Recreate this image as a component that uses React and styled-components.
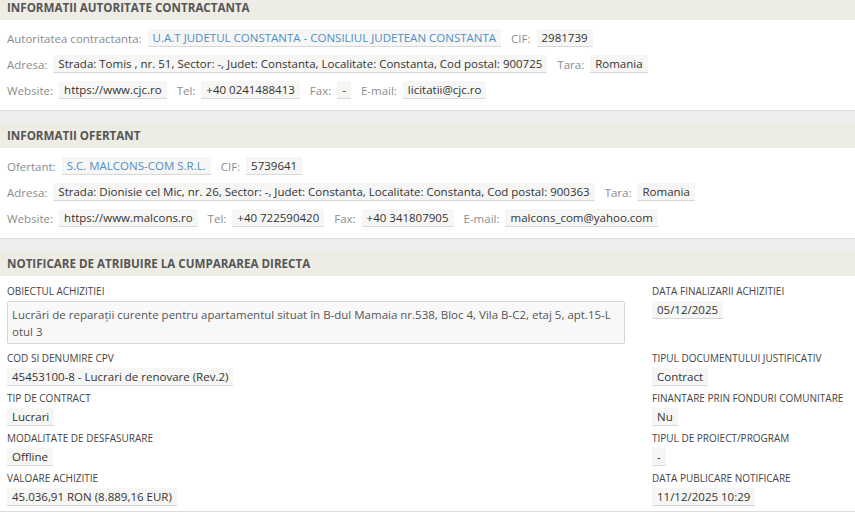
import React from "react";
import styled, { createGlobalStyle } from "styled-components";

const GlobalStyle = createGlobalStyle`
  html, body {
    margin: 0;
    padding: 0;
    background: #ffffff;
    font-family: "Open Sans", "Liberation Sans", sans-serif;
    overflow: hidden;
  }
`;

const Page = styled.div`
  width: 855px;
  margin-top: -5px;
`;

const Section = styled.section`
  background: #ffffff;
  border-bottom: 1px solid #dcdcdc;
`;

const Spacer = styled.div`
  height: 12px;
  background: #eeeeee;
`;

const SectionHeader = styled.div`
  height: 25px;
  display: flex;
  align-items: center;
  padding: 0 7px;
  background: #edece5;
  color: #555555;
  font-size: 11.6px;
  font-weight: 700;
  text-transform: uppercase;
`;

const InfoBody = styled.div`
  display: flex;
  flex-direction: column;
  gap: 8px;
  padding: 9px 7px 11px;
`;

const InfoRow = styled.div`
  display: flex;
  align-items: center;
  height: 18px;
  font-size: 11.5px;
`;

const InfoLabel = styled.span`
  color: #8c8c8c;
  margin-right: 6px;
  margin-left: ${(p) => (p.$first ? "0" : "10px")};
`;

const Value = styled.span`
  display: inline-block;
  padding: 0 5px;
  line-height: 17px;
  background: #f6f6f5;
  border-bottom: 1px solid #d8d8d8;
  color: ${(p) => (p.$link ? "#4f8fc6" : "#333333")};
`;

const NotifBody = styled.div`
  display: grid;
  grid-template-columns: 618px 1fr;
  column-gap: 27px;
  row-gap: 6px;
  padding: 9px 7px 5px;
`;

const Field = styled.div`
  display: flex;
  flex-direction: column;
  align-items: flex-start;
`;

const FieldLabel = styled.div`
  font-size: 10px;
  font-weight: 400;
  color: #444444;
  text-transform: uppercase;
  line-height: 13px;
  margin-bottom: 3px;
`;

const FieldValue = styled(Value)`
  font-size: 11.5px;
  line-height: 17px;
`;

const TextBox = styled.div`
  box-sizing: border-box;
  width: 100%;
  height: 43px;
  margin-bottom: 2px;
  padding: 4px 4px;
  border: 1px solid #d6d6d6;
  border-radius: 2px;
  background: #f8f8f8;
  color: #555555;
  font-size: 11.5px;
  line-height: 17px;
`;

const InfoLine = ({ items }) => (
  <InfoRow>
    {items.map(([label, value, link], i) => (
      <React.Fragment key={label}>
        <InfoLabel $first={i === 0}>{label}</InfoLabel>
        <Value $link={link}>{value}</Value>
      </React.Fragment>
    ))}
  </InfoRow>
);

const Item = ({ label, children }) => (
  <Field>
    <FieldLabel>{label}</FieldLabel>
    <FieldValue>{children}</FieldValue>
  </Field>
);

export default function App() {
  return (
    <Page>
      <GlobalStyle />
      <Section>
        <SectionHeader>Informatii autoritate contractanta</SectionHeader>
        <InfoBody>
          <InfoLine
            items={[
              ["Autoritatea contractanta:", "U.A.T JUDETUL CONSTANTA - CONSILIUL JUDETEAN CONSTANTA", true],
              ["CIF:", "2981739"],
            ]}
          />
          <InfoLine
            items={[
              ["Adresa:", "Strada: Tomis , nr. 51, Sector: -, Judet: Constanta, Localitate: Constanta, Cod postal: 900725"],
              ["Tara:", "Romania"],
            ]}
          />
          <InfoLine
            items={[
              ["Website:", "https://www.cjc.ro"],
              ["Tel:", "+40 0241488413"],
              ["Fax:", "-"],
              ["E-mail:", "licitatii@cjc.ro"],
            ]}
          />
        </InfoBody>
      </Section>
      <Spacer />
      <Section>
        <SectionHeader>Informatii ofertant</SectionHeader>
        <InfoBody>
          <InfoLine
            items={[
              ["Ofertant:", "S.C. MALCONS-COM S.R.L.", true],
              ["CIF:", "5739641"],
            ]}
          />
          <InfoLine
            items={[
              ["Adresa:", "Strada: Dionisie cel Mic, nr. 26, Sector: -, Judet: Constanta, Localitate: Constanta, Cod postal: 900363"],
              ["Tara:", "Romania"],
            ]}
          />
          <InfoLine
            items={[
              ["Website:", "https://www.malcons.ro"],
              ["Tel:", "+40 722590420"],
              ["Fax:", "+40 341807905"],
              ["E-mail:", "malcons_com@yahoo.com"],
            ]}
          />
        </InfoBody>
      </Section>
      <Spacer />
      <Section>
        <SectionHeader>Notificare de atribuire la cumpararea directa</SectionHeader>
        <NotifBody>
          <Field>
            <FieldLabel>Obiectul achizitiei</FieldLabel>
            <TextBox>
              Lucrări de reparații curente pentru apartamentul situat în B-dul Mamaia nr.538, Bloc 4, Vila B-C2, etaj 5, apt.15-L
              <br />
              otul 3
            </TextBox>
          </Field>
          <Item label="Data finalizarii achizitiei">05/12/2025</Item>
          <Item label="Cod si denumire CPV">45453100-8 - Lucrari de renovare (Rev.2)</Item>
          <Item label="Tipul documentului justificativ">Contract</Item>
          <Item label="Tip de contract">Lucrari</Item>
          <Item label="Finantare prin fonduri comunitare">Nu</Item>
          <Item label="Modalitate de desfasurare">Offline</Item>
          <Item label="Tipul de proiect/program">-</Item>
          <Item label="Valoare achizitie">45.036,91 RON (8.889,16 EUR)</Item>
          <Item label="Data publicare notificare">11/12/2025 10:29</Item>
        </NotifBody>
      </Section>
    </Page>
  );
}
